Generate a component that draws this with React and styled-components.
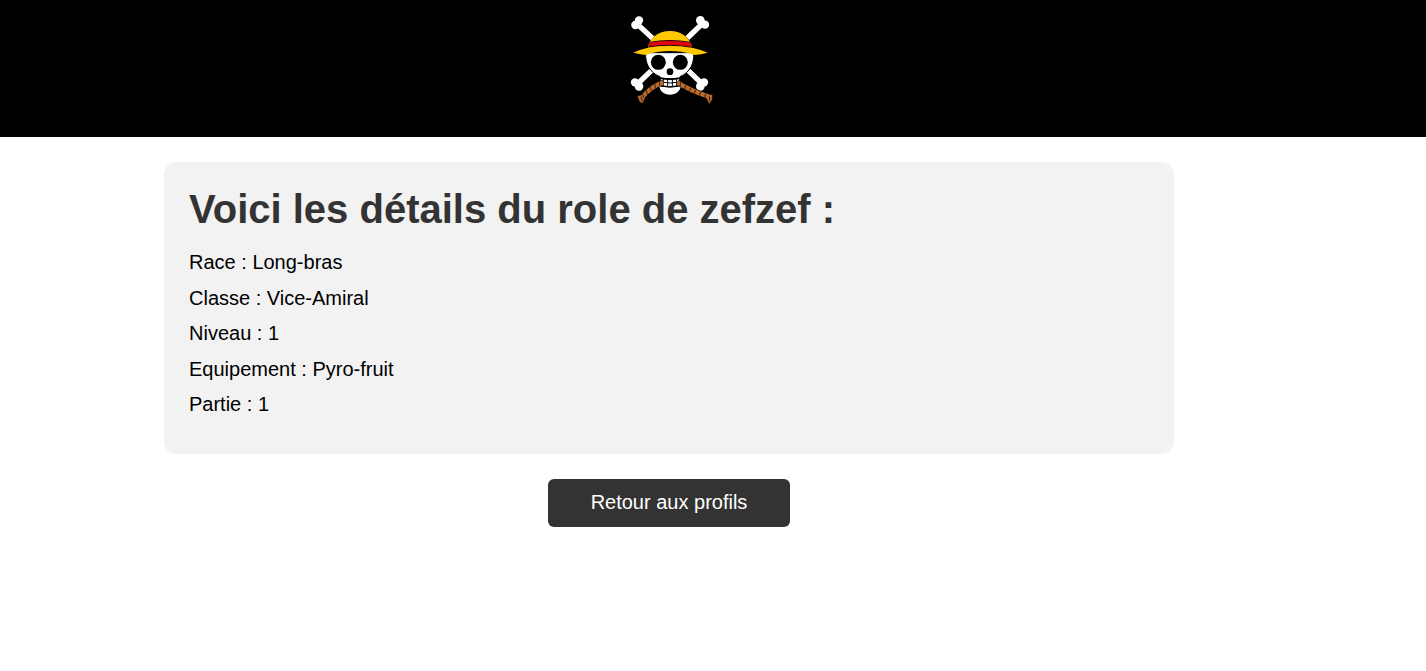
import React from "react";
import styled, { createGlobalStyle } from "styled-components";

const GlobalStyle = createGlobalStyle`
  * { box-sizing: border-box; }
  body {
    margin: 0;
    background: #fff;
    font-family: Arial, "Liberation Sans", sans-serif;
    font-size: 20px;
    color: #000;
  }
`;

const Header = styled.header`
  height: 137px;
  padding: 8px 88px 0 0;
  display: flex;
  justify-content: center;
  align-items: flex-start;
  background: #000;
`;

const LogoSvg = styled.svg`
  display: block;
  width: 100px;
  height: 100px;
  margin-left: 6px;
`;

const Main = styled.main`
  width: 1010px;
  margin: 25px 0 0 164px;
  display: flex;
  flex-direction: column;
  align-items: center;
  gap: 25px;
`;

const Card = styled.section`
  width: 100%;
  height: 292px;
  padding: 25px;
  border-radius: 12.5px;
  background: #f2f2f2;
`;

const Title = styled.h1`
  margin: 0 0 19px;
  font-size: 40px;
  line-height: 45px;
  white-space: nowrap;
  color: #333;
`;

const Detail = styled.p`
  margin: 0 0 12.5px;
  line-height: 23px;
`;

const BackButton = styled.button`
  width: 242px;
  height: 48px;
  padding: 0 0 2px;
  border: 0;
  border-radius: 6px;
  background: #333;
  color: #fff;
  font: inherit;
  cursor: pointer;
`;

const details = [
  ["Race", "Long-bras"],
  ["Classe", "Vice-Amiral"],
  ["Niveau", "1"],
  ["Equipement", "Pyro-fruit"],
  ["Partie", "1"],
];

function Logo() {
  return (
    <LogoSvg viewBox="0 0 300 300" role="img" aria-label="Logo">
      {/* crossed bones */}
      <g stroke="#fff" strokeWidth="16" fill="#fff">
        <path d="M50 52L92 91M238 50L196 90M45 229L88 188M242 229L199 188" />
        <g stroke="none">
          <circle cx="51" cy="37" r="12.5" /><circle cx="40" cy="51" r="12.5" />
          <circle cx="235" cy="37" r="13" /><circle cx="249" cy="50" r="12.5" />
          <circle cx="39" cy="223" r="12.5" /><circle cx="51" cy="235" r="13" />
          <circle cx="246" cy="223" r="12.5" /><circle cx="235" cy="235" r="13" />
        </g>
      </g>
      {/* skull and jaw */}
      <path d="M71 134C69 165 82 193 114 206V210Q144 216 174 210V206C205 193 217 165 215 134Z" fill="#fff" stroke="#000" strokeWidth="3" />
      <path d="M115 212Q144 218 173 212L171 233Q144 239 117 233Z" fill="#fff" stroke="#000" strokeWidth="2.5" />
      <path d="M112 233Q144 243 176 233C175 249 162 260 144 260C126 260 113 249 112 233Z" fill="#fff" />
      <circle cx="109" cy="163" r="22.5" fill="#000" />
      <circle cx="175" cy="163" r="22.5" fill="#000" />
      <circle cx="144" cy="191" r="10" fill="#000" />
      <path d="M114 210Q144 215 174 210M114 222Q144 228 175 222M114 234Q144 241 174 234M124 211V234M137 211V236M151 211V236M164 211V234" fill="none" stroke="#000" strokeWidth="3" />
      {/* crossed ropes */}
      <g fill="none">
        <path d="M124 223C101 229 79 246 60 268M166 223C192 240 222 253 260 266" stroke="#000" strokeWidth="16" />
        <path d="M124 223C101 229 79 246 60 268M166 223C192 240 222 253 260 266" stroke="#b96c2e" strokeWidth="13" />
        <path d="M48 264L70 264L65 276L61 284L54 281ZM253 262L270 261L269 276L262 286L256 274Z" fill="#b96c2e" stroke="#b96c2e" strokeWidth="2" />
        <path d="M112 220L113 233M98 226L100 240M85 235L88 250M73 246L76 260M61 258L66 269M57 266L61 280M176 223L174 235M191 231L188 244M206 239L202 250M221 245L217 257M236 251L232 263M251 257L248 269M262 265L264 280" stroke="#4c260e" strokeWidth="3.5" />
      </g>
      {/* straw hat */}
      <path d="M34 134Q54 124 78 119C82 90 108 69 144 69C180 69 205 90 210 119Q235 124 257 134Q238 140 218 141Q198 133 177 131Q144 127 110 131Q88 134 70 141Q52 138 34 134Z" fill="#ffc800" />
      <path d="M79 116L82 104Q144 92 205 104L209 117Q144 106 79 116Z" fill="#e60012" />
      <path d="M83 103Q144 92 205 103M78 117Q144 106 211 118" fill="none" stroke="#260000" strokeWidth="3" />
    </LogoSvg>
  );
}

export default function App() {
  return (
    <>
      <GlobalStyle />
      <Header><Logo /></Header>
      <Main>
        <Card>
          <Title>Voici les détails du role de zefzef :</Title>
          {details.map(([label, value]) => (
            <Detail key={label}>{label} : {value}</Detail>
          ))}
        </Card>
        <BackButton type="button">Retour aux profils</BackButton>
      </Main>
    </>
  );
}
